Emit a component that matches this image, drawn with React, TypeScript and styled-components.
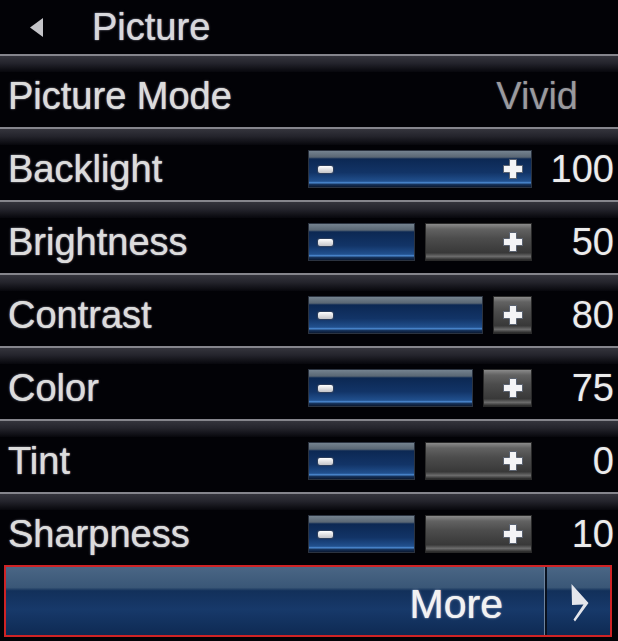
import React from 'react';
import styled, { createGlobalStyle } from 'styled-components';

const GlobalStyle = createGlobalStyle`
    html, body {
        margin: 0;
        padding: 0;
        background: #020206;
        overflow: hidden;
    }
    * {
        box-sizing: border-box;
    }
`;

const Screen = styled.div`
    display: flex;
    flex-direction: column;
    width: 618px;
    height: 641px;
    background: #020206;
    font-family: "Liberation Sans", Arial, sans-serif;
    color: #dedede;
`;

const Header = styled.div`
    display: flex;
    align-items: center;
    gap: 49px;
    height: 54px;
    padding-left: 30px;
    font-size: 38px;
    color: #d8d8dc;
    text-shadow: 0 0 1px #d8d8dc, 0 0 3px rgba(200, 200, 220, .35);
`;

const Row = styled.div`
    display: flex;
    flex-direction: column;
    height: 73px;
`;

const Separator = styled.div`
    height: 18px;
    border-top: 2px solid #85858c;
    background: linear-gradient(to bottom, #34343c 0%, #24242c 45%, #07070c 100%);
`;

const RowBody = styled.div<{ $padRight?: number }>`
    display: flex;
    align-items: center;
    height: 48px;
    padding-left: 8px;
    padding-right: ${(p) => p.$padRight ?? 4}px;
`;

const Label = styled.div`
    flex: 1;
    font-size: 38px;
    color: #dcdcdc;
    white-space: nowrap;
    text-shadow: 0 0 1px #dcdcdc, 0 0 3px rgba(210, 210, 230, .35);
`;

const Value = styled.div<{ $muted?: boolean }>`
    width: ${(p) => (p.$muted ? 'auto' : '82px')};
    text-align: right;
    font-size: 38px;
    color: ${(p) => (p.$muted ? '#9a9a9e' : '#ececec')};
    text-shadow: 0 0 2px rgba(210, 210, 230, .3);
`;

const Track = styled.div`
    position: relative;
    display: flex;
    gap: 10px;
    width: 224px;
    height: 38px;
`;

const Filled = styled.div`
    flex: none;
    height: 100%;
    border: 1px solid #2b3340;
    background: linear-gradient(
        to bottom,
        #74828f 0%,
        #5a6774 17%,
        #0c2853 22%,
        #123467 60%,
        #21508e 84%,
        #4b88cf 88%,
        #16325a 93%,
        #0a1830 100%
    );
`;

const Empty = styled.div`
    flex: 1;
    height: 100%;
    border: 1px solid #2a2a2a;
    background: linear-gradient(
        to bottom,
        #8a8a8a 0%,
        #626262 14%,
        #4c4c4c 40%,
        #383838 80%,
        #6c6c6c 90%,
        #262626 100%
    );
`;

const Minus = styled.div`
    position: absolute;
    left: 10px;
    top: 16px;
    width: 15px;
    height: 7px;
    border-radius: 2px;
    background: linear-gradient(to bottom, #ffffff, #c4c4c8);
    box-shadow: 0 0 1px 1px rgba(60, 70, 90, .7);
`;

const PlusIcon = styled.svg`
    position: absolute;
    right: 8px;
    top: 8px;
    width: 22px;
    height: 22px;
`;

const MoreButton = styled.div`
    display: flex;
    height: 72px;
    margin: 0 6px 0 4px;
    border: 2px solid #cf2325;
    background: linear-gradient(
        to bottom,
        #4a6685 0%,
        #3a5777 30%,
        #12305a 35%,
        #17396a 62%,
        #0e2a53 100%
    );
`;

const MoreLabel = styled.div`
    flex: 1;
    display: flex;
    align-items: center;
    justify-content: flex-end;
    padding-right: 42px;
    padding-top: 6px;
    font-size: 41px;
    color: #f2f2f2;
    text-shadow: 0 0 1px #f2f2f2, 0 0 3px rgba(220, 230, 255, .4);
`;

const ArrowCell = styled.div`
    display: flex;
    align-items: center;
    justify-content: center;
    width: 65px;
    padding-top: 4px;
    padding-left: 2px;
    border-left: 2px solid #09111f;
    box-shadow: -1px 0 0 #6d839e;
`;

type Setting = {
    label: string;
    value: number;
    fraction: number;
};

const settings: Setting[] = [
    { label: 'Backlight', value: 100, fraction: 1 },
    { label: 'Brightness', value: 50, fraction: 0.5 },
    { label: 'Contrast', value: 80, fraction: 0.82 },
    { label: 'Color', value: 75, fraction: 0.77 },
    { label: 'Tint', value: 0, fraction: 0.5 },
    { label: 'Sharpness', value: 10, fraction: 0.5 },
];

const Plus = () => (
    <PlusIcon viewBox="0 0 22 22">
        <path
            d="M7.5 1.5h7v6h6v7h-6v6h-7v-6h-6v-7h6z"
            fill="#f4f4f6"
            stroke="#5a6270"
            strokeWidth="1"
            strokeLinejoin="round"
        />
    </PlusIcon>
);

const Slider = ({ fraction }: { fraction: number }) => {
    const full = fraction >= 1;
    const fillWidth = full ? 224 : Math.round(fraction * 214);
    return (
        <Track>
            <Filled style={{ width: fillWidth }} />
            {!full && <Empty />}
            <Minus />
            <Plus />
        </Track>
    );
};

const App = () => {
    return (
        <>
            <GlobalStyle />
            <Screen>
                <Header>
                    <svg width="13" height="19" viewBox="0 0 13 19">
                        <polygon points="13,0 13,19 0,9.5" fill="#c4c4c8" />
                    </svg>
                    <span>Picture</span>
                </Header>
                <Row>
                    <Separator />
                    <RowBody $padRight={40}>
                        <Label>Picture Mode</Label>
                        <Value $muted>Vivid</Value>
                    </RowBody>
                </Row>
                {settings.map((s) => (
                    <Row key={s.label}>
                        <Separator />
                        <RowBody>
                            <Label>{s.label}</Label>
                            <Slider fraction={s.fraction} />
                            <Value>{s.value}</Value>
                        </RowBody>
                    </Row>
                ))}
                <MoreButton>
                    <MoreLabel>More</MoreLabel>
                    <ArrowCell>
                        <svg width="18" height="38" viewBox="0 0 18 38">
                            <path
                                d="M0.5 0 L17.5 19 L4 37.5 L2.5 35.5 L12.5 20.5 L1 21 Z"
                                fill="#e4e6ec"
                            />
                        </svg>
                    </ArrowCell>
                </MoreButton>
            </Screen>
        </>
    );
};

export default App;
